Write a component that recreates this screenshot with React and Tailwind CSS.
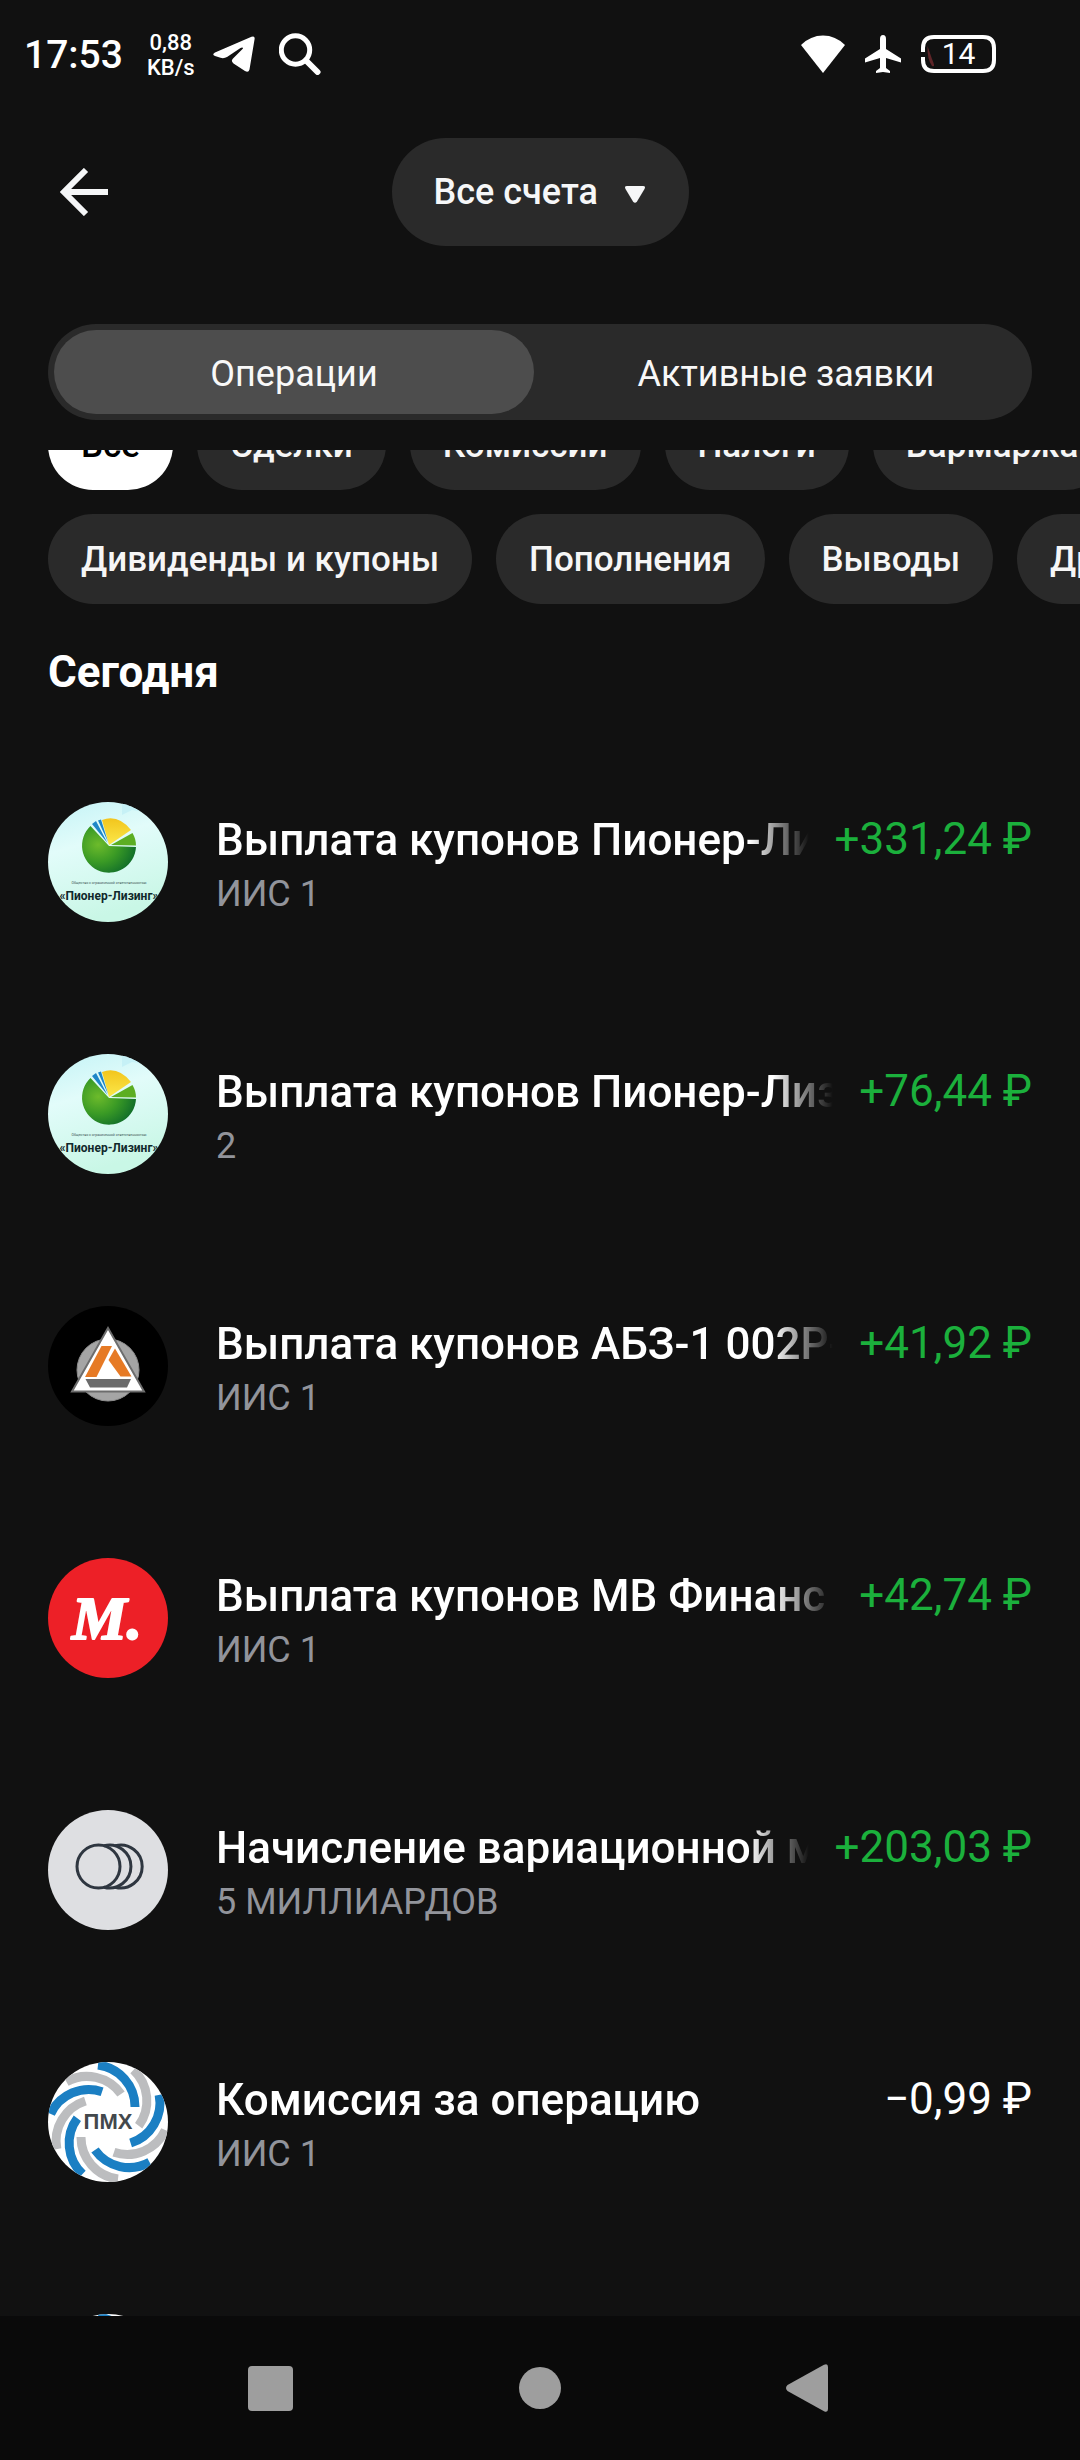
import { useLayoutEffect, useRef, useState } from 'react'

const filterRows = [
  ['Все', 'Сделки', 'Комиссии', 'Налоги', 'Вармаржа'],
  ['Дивиденды и купоны', 'Пополнения', 'Выводы', 'Другое'],
]

const operations = [
  { id: 1, logo: PioneerLogo, title: 'Выплата купонов Пионер-Лизинг', account: 'ИИС 1', amount: '+331,24 ₽' },
  { id: 2, logo: PioneerLogo, title: 'Выплата купонов Пионер-Лизинг', account: '2', amount: '+76,44 ₽' },
  { id: 3, logo: AbzLogo, title: 'Выплата купонов АБЗ-1 002Р-03', account: 'ИИС 1', amount: '+41,92 ₽' },
  { id: 4, logo: MLogo, title: 'Выплата купонов МВ Финанс', account: 'ИИС 1', amount: '+42,74 ₽' },
  { id: 5, logo: CoinsLogo, title: 'Начисление вариационной маржи', account: '5 МИЛЛИАРДОВ', amount: '+203,03 ₽' },
  { id: 6, logo: PmhLogo, title: 'Комиссия за операцию', account: 'ИИС 1', amount: '−0,99 ₽' },
  { id: 7, logo: PmhLogo, title: 'Покупка ПМХ', account: 'ИИС 1', amount: '−330,00 ₽' },
]

function PioneerLogo() {
  return (
    <svg viewBox="0 0 120 120" className="size-full">
      <defs>
        <linearGradient id="sky" x1="0" y1="0" x2="0.3" y2="1">
          <stop offset="0" stopColor="#c4f3f6" />
          <stop offset="0.4" stopColor="#e2fcfa" />
          <stop offset="1" stopColor="#c9f7e6" />
        </linearGradient>
        <radialGradient id="ball" cx="0.3" cy="0.4" r="0.75">
          <stop offset="0" stopColor="#6dbb2b" />
          <stop offset="0.5" stopColor="#3a9a25" />
          <stop offset="1" stopColor="#0d6a2a" />
        </radialGradient>
        <linearGradient id="sun" x1="0" y1="0" x2="0" y2="1">
          <stop offset="0" stopColor="#f2c51d" />
          <stop offset="1" stopColor="#fbe84a" />
        </linearGradient>
      </defs>
      <rect width="120" height="120" fill="url(#sky)" />
      <path d="M74 0h14l10 10-14-2-10 5z" fill="#c6f1f6" />
      <path d="M61 44L42.500 24A27 27 0 1 0 88 45z" fill="url(#ball)" />
      <path d="M63 43L84.500 31Q88 37 88 43.500z" fill="#5cae22" />
      <path d="M61 43L54 18Q70 12 83 28z" fill="url(#sun)" />
      <path d="M59.500 41L44 22l4-3zM60 40L50 18.500l3-1z" fill="#1e86c8" />
      <text x="61" y="82" textAnchor="middle" fontSize="3.500" fill="#3c5555" className="font-[Roboto,sans-serif]">
        Общество с ограниченной ответственностью
      </text>
      <text x="61" y="98" textAnchor="middle" fontSize="12" fill="#10282b" className="font-[Roboto,sans-serif] font-bold">
        «Пионер-Лизинг»
      </text>
    </svg>
  )
}

function AbzLogo() {
  return (
    <svg viewBox="0 0 120 120" className="size-full">
      <rect width="120" height="120" fill="#000" />
      <circle cx="60" cy="64" r="31" fill="#a5a5a5" stroke="#8c8c8c" strokeWidth="1" />
      <path d="M60 22L24 85.500H96z" fill="#fff" stroke="#6d6d6d" strokeWidth="2" />
      <path d="M53.500 40H64L48.500 71H37z" fill="#e67a25" />
      <path d="M67 42.500L83.500 70.500H72.500L60.500 54z" fill="#e67a25" />
      <path d="M37.500 73H83L79 81.500H42z" fill="#6b6b6b" />
    </svg>
  )
}

function MLogo() {
  return (
    <svg viewBox="0 0 120 120" className="size-full">
      <rect width="120" height="120" fill="#ed2027" />
      <text
        x="59"
        y="81"
        textAnchor="middle"
        fontSize="62"
        fill="#fff"
        stroke="#fff"
        strokeWidth="2"
        strokeLinejoin="round"
        className="font-['Liberation_Serif',serif] font-bold italic"
      >
        M.
      </text>
    </svg>
  )
}

function CoinsLogo() {
  return (
    <svg viewBox="0 0 120 120" className="size-full">
      <rect width="120" height="120" fill="#dedfe2" />
      <g fill="none" stroke="#2e3640" strokeWidth="3">
        <circle cx="50.500" cy="56.500" r="21.500" />
        <path d="M56 35.700A21.500 21.500 0 1 1 56 77.300" />
        <path d="M67.250 35.700A21.500 21.500 0 1 1 67.250 77.300" />
      </g>
    </svg>
  )
}

function PmhLogo() {
  return (
    <svg viewBox="0 0 120 120" className="size-full">
      <rect width="120" height="120" fill="#fff" />
      {[0, 36, 72, 108, 144, 180, 216, 252, 288, 324].map((angle, i) => (
        <path
          key={angle}
          d="M50 3A42 42 0 0 1 87 45"
          transform={`rotate(${angle} 60 60)`}
          fill="none"
          stroke={i % 2 === 0 ? '#1b7fc3' : '#bcbdbf'}
          strokeWidth="9"
        />
      ))}
      <text x="60" y="67" textAnchor="middle" fontSize="22" fill="#43484c" className="font-['Liberation_Sans',sans-serif] font-bold">
        ПМХ
      </text>
    </svg>
  )
}

function StatusBar() {
  return (
    <div className="flex h-[108px] shrink-0 items-center justify-between pl-6 pr-[84px]">
      <div className="flex items-center">
        <span className="pt-[2px] text-[39px] leading-[48px] font-medium">17:53</span>
        <span className="ml-6 pt-[2px] text-center text-[22px] leading-[25px] font-medium">
          0,88
          <br />
          KB/s
        </span>
        <svg viewBox="0 0 42 36" className="ml-[18px] h-9 w-[42px]" fill="#fff">
          <path d="M2 16.500L38.500 0.800Q42 -0.500 41.600 3L36.500 33.500Q35.500 37 32 35L20.500 27.500Q17.500 25 20 22.500L30 12.500Q30 11 27.500 12L14 21Q11 22.800 7.500 21.800L2 20Q-1.500 18.500 2 16.500z" />
        </svg>
        <svg viewBox="0 0 42 42" className="ml-6 size-[42px]" fill="none" stroke="#fff">
          <circle cx="16.500" cy="17" r="14.200" strokeWidth="5" />
          <path d="M27 27.500L38.500 39" strokeWidth="6" strokeLinecap="round" />
        </svg>
      </div>
      <div className="flex items-center">
        <svg viewBox="0 0 44 38" className="h-[38px] w-11" fill="#fff">
          <path d="M22 38L0 10Q9.500 0.500 22 0.500T44 10z" />
        </svg>
        <svg viewBox="0 0 36 38" className="ml-5 h-[38px] w-9" fill="#fff">
          <path d="M18 0Q21 0 21 4V14L36 23.500V27.500L21 23V33L25 36V38L18 37L11 38V36L15 33V23L0 27.500V23.500L15 14V4Q15 0 18 0z" />
        </svg>
        <div className="relative ml-5 flex h-[38px] w-[75px] items-center justify-center">
          <svg viewBox="0 0 75 38" className="absolute inset-0 size-full" fill="none">
            <path d="M6.500 11Q6 24 11 31Q15 33 11 24z" fill="#5e2528" />
            <path d="M2 17V13Q2 2 13 2H62Q73 2 73 13V25Q73 36 62 36H13Q2 36 2 25V22" stroke="#fff" strokeWidth="4" />
          </svg>
          <span className="relative text-[30px] leading-8">14</span>
        </div>
      </div>
    </div>
  )
}

function Header() {
  return (
    <header className="grid h-[168px] shrink-0 grid-cols-[1fr_auto_1fr] items-center px-12">
      <button type="button" aria-label="Назад" className="flex size-[72px] items-center justify-center">
        <svg viewBox="0 0 48 48" className="size-12" fill="none" stroke="#f5f6f7" strokeWidth="6">
          <path d="M48 24H4M26 2L4 24L26 46" />
        </svg>
      </button>
      <div className="relative">
        <select
          aria-label="Счёт"
          className="h-[108px] appearance-none rounded-full bg-[#2a2a2a] pr-[90px] pl-[42px] text-[36px] font-medium text-[#f6f7f8] outline-none"
        >
          <option>Все счета</option>
        </select>
        <svg viewBox="0 0 20 17" className="pointer-events-none absolute top-12 right-11 h-[17px] w-5" fill="#f6f7f8">
          <path d="M2 0H18Q21 0 19.500 3L12 15.500Q10 18 8 15.500L0.500 3Q-1 0 2 0z" />
        </svg>
      </div>
    </header>
  )
}

function Tabs() {
  const [active, setActive] = useState('Операции')

  return (
    <div role="tablist" className="mx-12 mt-12 mb-[30px] flex shrink-0 gap-3 rounded-full bg-[#2a2a2a] p-[6px]">
      {['Операции', 'Активные заявки'].map((tab) => (
        <button
          key={tab}
          type="button"
          role="tab"
          aria-selected={tab === active}
          onClick={() => setActive(tab)}
          className={`h-[84px] flex-1 rounded-full pt-1 text-[36px] leading-[48px] text-[#f8f8f8] ${tab === active ? 'bg-[#4d4d4d]' : ''}`}
        >
          {tab}
        </button>
      ))}
    </div>
  )
}

function Filters() {
  const [selected, setSelected] = useState('Все')

  return (
    <div className="flex flex-col gap-6 overflow-hidden pl-12">
      {filterRows.map((row) => (
        <div key={row[0]} className="flex gap-6">
          {row.map((name) => (
            <button
              key={name}
              type="button"
              onClick={() => setSelected(name)}
              className={`h-[90px] shrink-0 rounded-full px-[33px] pt-[2px] text-[35px] leading-[48px] font-medium ${name === selected ? 'bg-white text-black' : 'bg-[#2a2a2a] text-[#f6f6f6]'}`}
            >
              {name}
            </button>
          ))}
        </div>
      ))}
    </div>
  )
}

function Operation({ logo: Logo, title, account, amount }) {
  return (
    <li className="flex h-[252px] items-start px-12 pt-[66px]">
      <div className="size-[120px] shrink-0 overflow-hidden rounded-full">
        <Logo />
      </div>
      <div className="ml-12 min-w-0 flex-1 pt-3">
        {/* long titles fade out before the amount */}
        <p className="overflow-hidden text-[44px] leading-[52px] font-medium whitespace-nowrap [mask-image:linear-gradient(to_right,black_calc(100%-60px),transparent)]">
          {title}
        </p>
        <p className="text-[36px] leading-[56px] text-[#92949b]">{account}</p>
      </div>
      <p className={`ml-[26px] pt-3 text-[44px] leading-[50px] whitespace-nowrap ${amount.startsWith('+') ? 'text-[#1bb03c]' : 'text-white'}`}>
        {amount}
      </p>
    </li>
  )
}

function NavBar() {
  return (
    <nav className="grid h-36 shrink-0 grid-cols-3 bg-[#0a0a0a] px-[135px]">
      <button type="button" aria-label="Недавние" className="flex items-center justify-center">
        <span className="size-[45px] rounded-[4px] bg-[#9e9e9e]" />
      </button>
      <button type="button" aria-label="Домой" className="flex items-center justify-center">
        <span className="size-[42px] rounded-full bg-[#9e9e9e]" />
      </button>
      <button type="button" aria-label="Назад" className="flex items-center justify-center">
        <svg viewBox="0 0 48 48" className="size-12" fill="#9e9e9e">
          <path d="M1.500 21L38 0.800Q42 -1 42 3V45Q42 49 38 47.200L1.500 27Q-1.500 24 1.500 21z" />
        </svg>
      </button>
    </nav>
  )
}

export default function App() {
  const listRef = useRef(null)

  // the feed opens slightly scrolled, with the first filter row under the tabs
  useLayoutEffect(() => {
    listRef.current.scrollTop = 50
  }, [])

  return (
    <div className="flex h-screen w-full flex-col overflow-hidden bg-[#111111] font-[Roboto,sans-serif] text-white">
      <StatusBar />
      <Header />
      <Tabs />
      <main ref={listRef} className="min-h-0 flex-1 overflow-y-auto [scrollbar-width:none]">
        <Filters />
        <h2 className="flex h-[132px] items-center px-12 pt-1 text-[44px] leading-[54px] font-bold">Сегодня</h2>
        <ul>
          {operations.map((op) => (
            <Operation key={op.id} {...op} />
          ))}
        </ul>
      </main>
      <NavBar />
    </div>
  )
}
